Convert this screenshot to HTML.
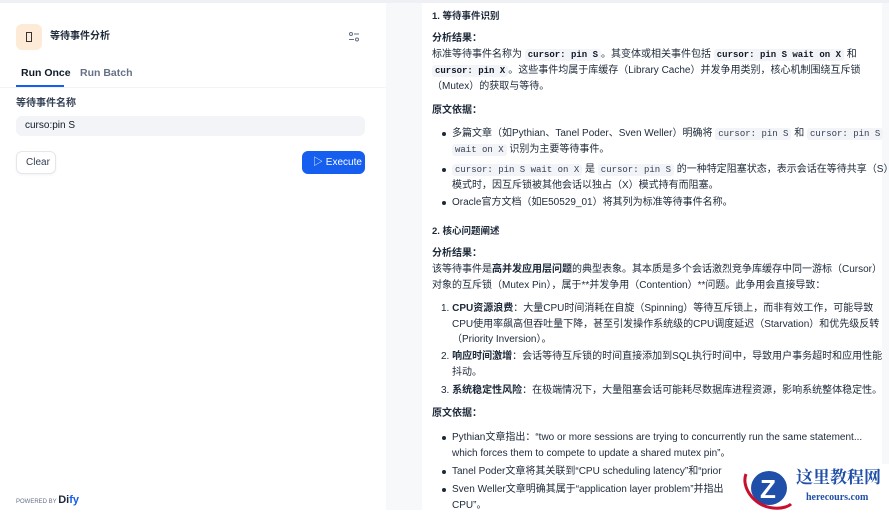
<!DOCTYPE html>
<html><head><meta charset="utf-8"><style>
*{margin:0;padding:0;box-sizing:border-box}
body{width:889px;height:510px;overflow:hidden;background:#fff;font-family:"Liberation Sans","Noto Sans CJK SC",sans-serif;color:#101828;position:relative}
.topline{position:absolute;left:0;top:0;width:889px;height:3px;background:#eef0f3}
.left{position:absolute;left:0;top:3px;width:386px;height:507px;background:#fff}
.right{position:absolute;left:386px;top:3px;width:503px;height:507px;background:#f7f8fa}
.card{position:absolute;left:422px;top:3px;width:460px;height:507px;background:#fff}
.a{position:absolute;white-space:nowrap;font-size:10px;line-height:16px;color:#1d2939}
.b{font-weight:bold}
code{font-family:"Liberation Mono",monospace;font-size:9px;background:#f2f4f7;padding:1px 3px;border-radius:3px;color:#344054}
code.k{font-weight:bold;color:#101828}
.dot{position:absolute;width:4px;height:4px;border-radius:2px;background:#1d2939}
</style></head><body>
<div class="topline"></div>
<div class="left">
 <div style="position:absolute;left:16px;top:21px;width:26px;height:26px;border-radius:6px;background:#fdebd8"></div>
 <div style="position:absolute;left:26px;top:29px;width:6px;height:10px;border:1px solid #333"></div>
 <div class="a b" style="left:50px;top:26px;font-size:10px;color:#1d2939">等待事件分析</div>
 <svg style="position:absolute;left:348px;top:28px" width="12" height="12" viewBox="0 0 12 12" fill="none" stroke="#667085" stroke-width="1"><circle cx="3" cy="3" r="1.5"/><line x1="6" y1="3" x2="11" y2="3"/><circle cx="9" cy="8.5" r="1.5"/><line x1="1" y1="8.5" x2="6" y2="8.5"/></svg>
 <div class="a b" style="left:21px;top:62px;font-size:10.5px;color:#101828">Run Once</div>
 <div class="a b" style="left:80px;top:62px;font-size:10.5px;color:#667085">Run Batch</div>
 <div style="position:absolute;left:16px;top:82px;width:48px;height:2px;background:#155eef"></div>
 <div style="position:absolute;left:0;top:84px;width:386px;height:1px;background:#f2f4f7"></div>
 <div class="a b" style="left:16px;top:93px;color:#344054">等待事件名称</div>
 <div style="position:absolute;left:16px;top:113px;width:349px;height:20px;border-radius:6px;background:#f2f4f7"></div>
 <div class="a" style="left:25px;top:115px;color:#101828">curso:pin S</div>
 <div style="position:absolute;left:16px;top:148px;width:40px;height:23px;border:1px solid #e4e7ec;border-radius:6px;background:#fff;box-shadow:0 1px 2px rgba(0,0,0,.05)"></div>
 <div class="a" style="left:26px;top:151px;line-height:17px;color:#344054">Clear</div>
 <div style="position:absolute;left:302px;top:148px;width:63px;height:23px;border-radius:6px;background:#155eef"></div>
 <div class="a" style="left:313px;top:151px;line-height:17px;color:#fff">▷ Execute</div>
 <div class="a" style="left:16px;top:489px;font-size:6px;color:#667085">POWERED BY <span style="font-size:11px;font-weight:bold;color:#1d2939">Di<span style="color:#155eef">fy</span></span></div>
</div>
<div class="right"></div>
<div class="card"></div>

<div class="a b" style="left:432px;top:9px;font-size:9.5px">1. 等待事件识别</div>
<div class="a b" style="left:432px;top:31px">分析结果：</div>
<div class="a" style="left:432px;top:47px">标准等待事件名称为 <code class="k">cursor: pin S</code>。其变体或相关事件包括 <code class="k">cursor: pin S wait on X</code> 和</div>
<div class="a" style="left:432px;top:63px"><code class="k">cursor: pin X</code>。这些事件均属于库缓存（Library Cache）并发争用类别，核心机制围绕互斥锁</div>
<div class="a" style="left:432px;top:79px">（Mutex）的获取与等待。</div>
<div class="a b" style="left:432px;top:103px">原文依据：</div>
<div class="dot" style="left:442px;top:132px"></div>
<div class="a" style="left:452px;top:126px">多篇文章（如Pythian、Tanel Poder、Sven Weller）明确将 <code>cursor: pin S</code> 和 <code>cursor: pin S</code></div>
<div class="a" style="left:452px;top:142px"><code>wait on X</code> 识别为主要等待事件。</div>
<div class="dot" style="left:442px;top:168px"></div>
<div class="a" style="left:452px;top:162px"><code>cursor: pin S wait on X</code> 是 <code>cursor: pin S</code> 的一种特定阻塞状态，表示会话在等待共享（S）</div>
<div class="a" style="left:452px;top:178px">模式时，因互斥锁被其他会话以独占（X）模式持有而阻塞。</div>
<div class="dot" style="left:442px;top:201px"></div>
<div class="a" style="left:452px;top:195px">Oracle官方文档（如E50529_01）将其列为标准等待事件名称。</div>

<div class="a b" style="left:432px;top:224px;font-size:9.5px">2. 核心问题阐述</div>
<div class="a b" style="left:432px;top:246px">分析结果：</div>
<div class="a" style="left:432px;top:262px">该等待事件是<b>高并发应用层问题</b>的典型表象。其本质是多个会话激烈竞争库缓存中同一游标（Cursor）</div>
<div class="a" style="left:432px;top:278px">对象的互斥锁（Mutex Pin），属于**并发争用（Contention）**问题。此争用会直接导致：</div>
<div class="a" style="left:441px;top:301px">1. <b>CPU资源浪费</b>：大量CPU时间消耗在自旋（Spinning）等待互斥锁上，而非有效工作，可能导致</div>
<div class="a" style="left:452px;top:317px">CPU使用率飙高但吞吐量下降，甚至引发操作系统级的CPU调度延迟（Starvation）和优先级反转</div>
<div class="a" style="left:452px;top:332px">（Priority Inversion）。</div>
<div class="a" style="left:441px;top:349px">2. <b>响应时间激增</b>：会话等待互斥锁的时间直接添加到SQL执行时间中，导致用户事务超时和应用性能</div>
<div class="a" style="left:452px;top:365px">抖动。</div>
<div class="a" style="left:441px;top:383px">3. <b>系统稳定性风险</b>：在极端情况下，大量阻塞会话可能耗尽数据库进程资源，影响系统整体稳定性。</div>
<div class="a b" style="left:432px;top:406px">原文依据：</div>
<div class="dot" style="left:442px;top:436px"></div>
<div class="a" style="left:452px;top:430px">Pythian文章指出：“two or more sessions are trying to concurrently run the same statement...</div>
<div class="a" style="left:452px;top:446px">which forces them to compete to update a shared mutex pin”。</div>
<div class="dot" style="left:442px;top:470px"></div>
<div class="a" style="left:452px;top:464px">Tanel Poder文章将其关联到“CPU scheduling latency”和“prior</div>
<div class="dot" style="left:442px;top:488px"></div>
<div class="a" style="left:452px;top:482px">Sven Weller文章明确其属于“application layer problem”并指出</div>
<div class="a" style="left:452px;top:498px">CPU”。</div>

<div style="position:absolute;left:743px;top:464px;width:146px;height:46px;background:#fff"></div>
<svg style="position:absolute;left:743px;top:466px" width="50" height="44" viewBox="0 0 50 44"><ellipse cx="26" cy="22" rx="18" ry="17" fill="#1f4fa8"/><path d="M3 8 C-2 20 10 40 30 42 C40 43 46 40 48 38" stroke="#c8102e" stroke-width="3" fill="none"/><text x="17" y="32" font-family="Liberation Sans" font-weight="bold" font-size="26" fill="#fff">Z</text></svg>
<div class="a b" style="left:796px;top:466px;font-size:17px;line-height:20px;color:#1f4fa8;font-family:'Noto Serif CJK SC',serif">这里教程网</div>
<div class="a b" style="left:806px;top:490px;font-size:10px;color:#1f4fa8;font-family:'Liberation Serif',serif">herecours.com</div>
</body></html>
